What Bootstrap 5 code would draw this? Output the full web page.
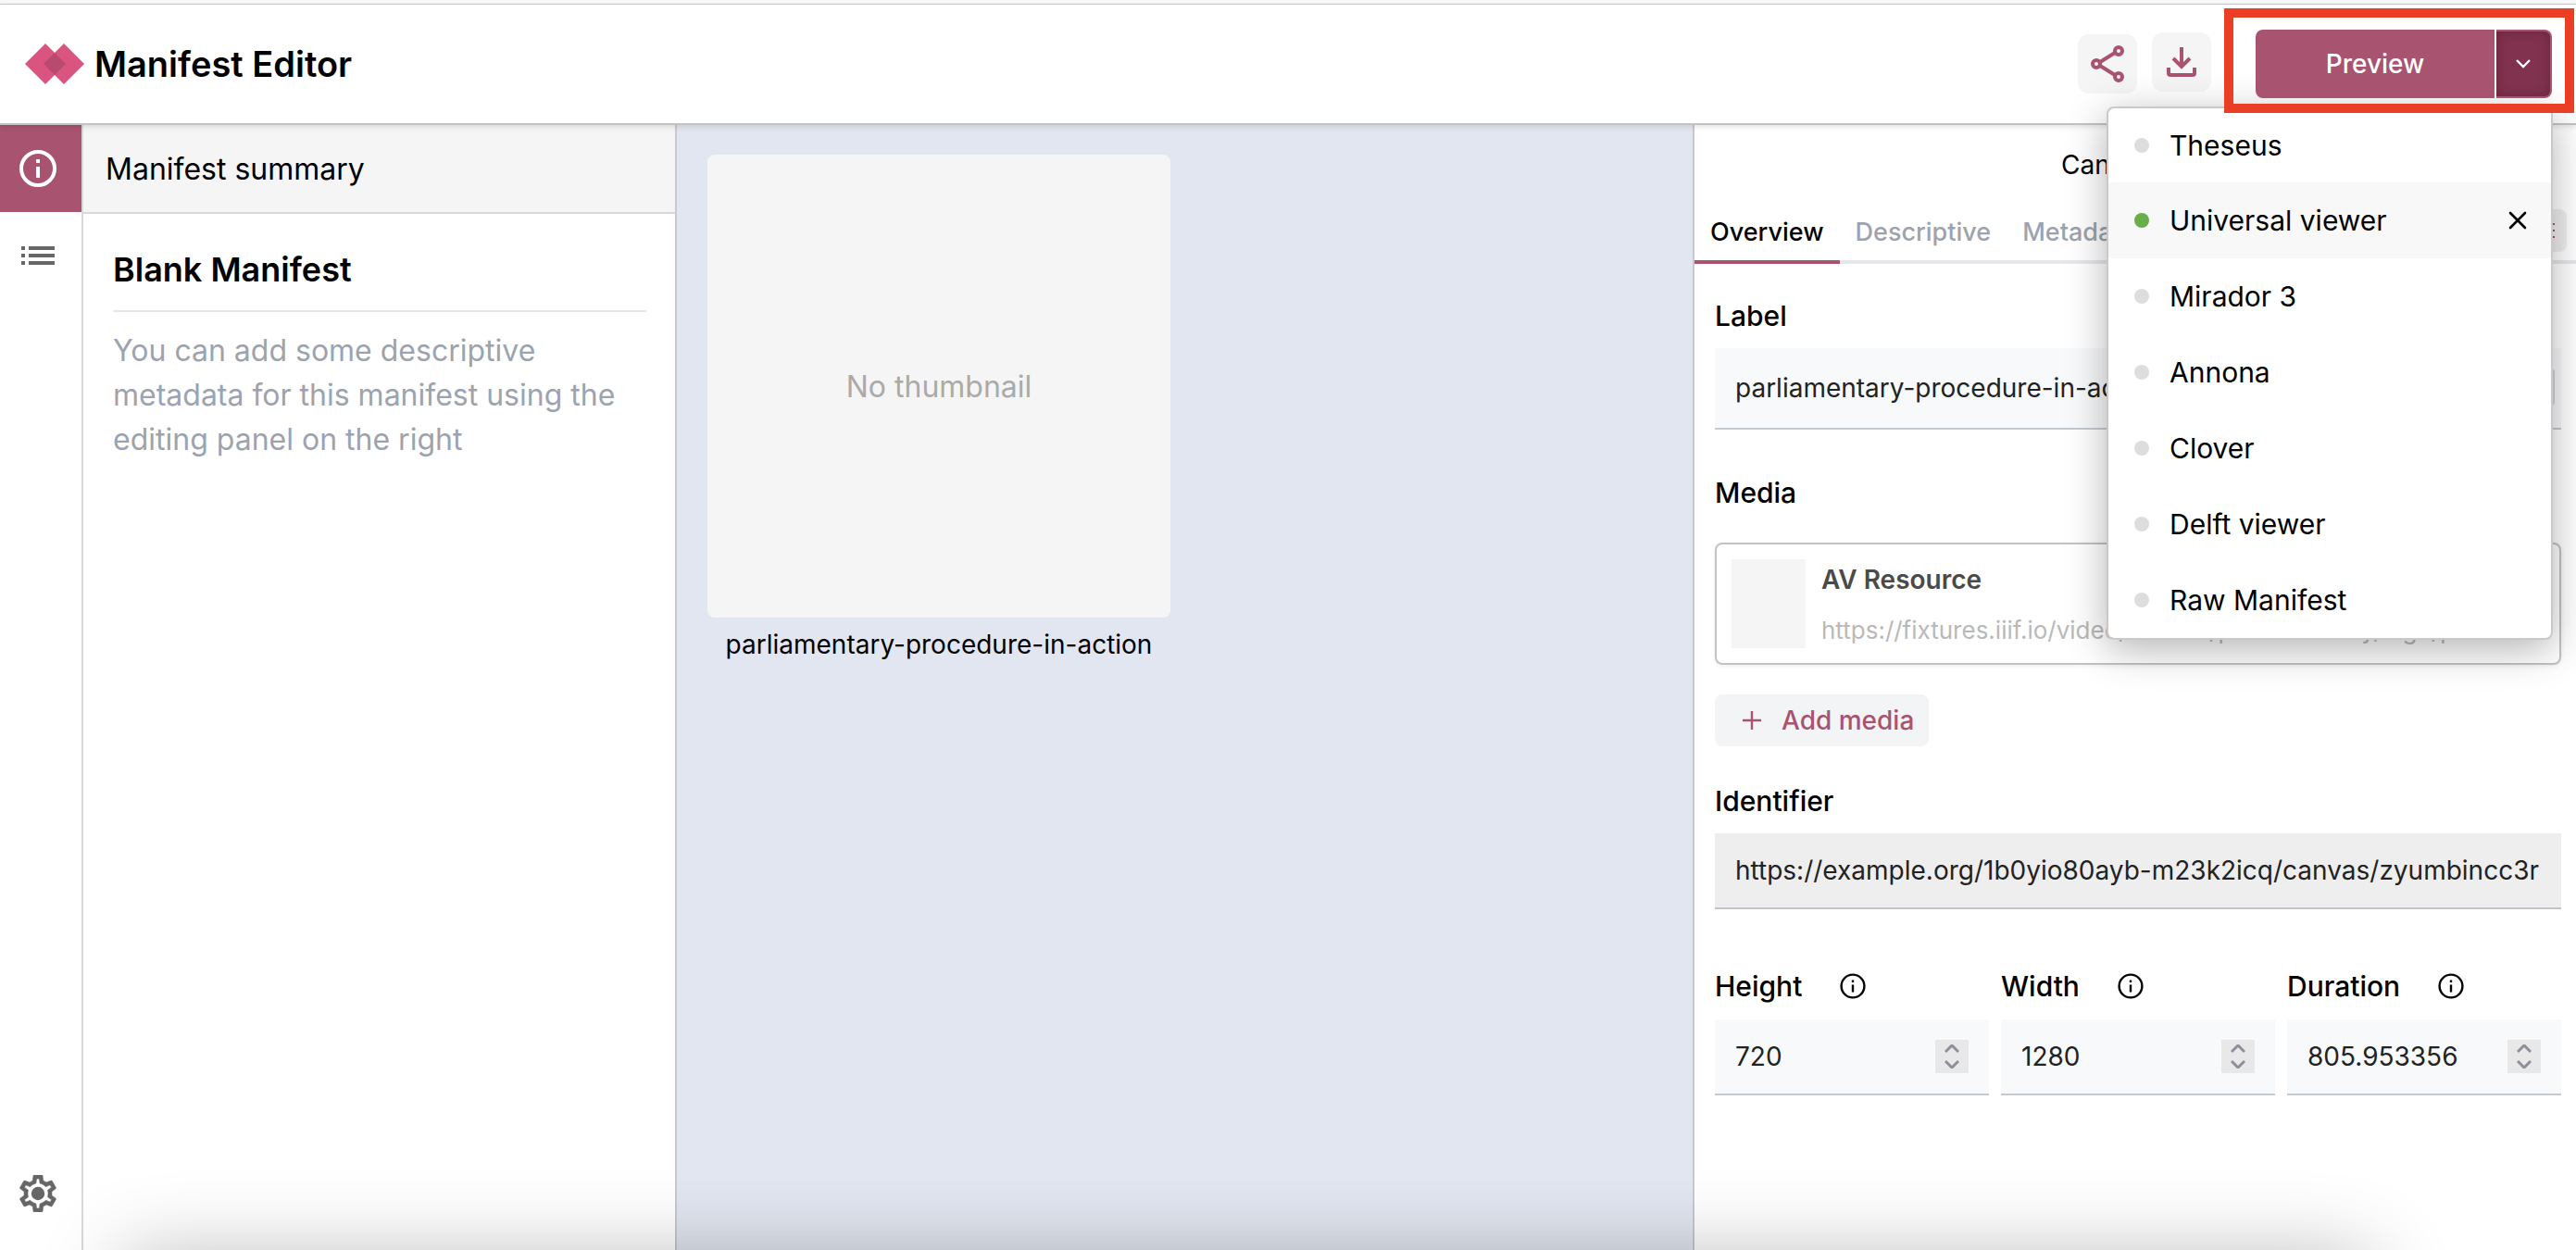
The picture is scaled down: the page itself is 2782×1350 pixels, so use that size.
<!DOCTYPE html>
<html lang="en">
<head>
<meta charset="utf-8">
<title>Manifest Editor</title>
<meta name="viewport" content="width=device-width, initial-scale=1">
<link rel="stylesheet" href="https://cdn.jsdelivr.net/npm/bootstrap@5.3.0/dist/css/bootstrap.min.css">
<style>
:root { --brand: #a85370; --brand-dark: #80324e; --line: #c9c9c9; --muted: #9ca3af; }
body { font-family: Inter, "Liberation Sans", sans-serif; font-size: 28px; line-height: 40px; color: #000; background: #fff; overflow: hidden; }
svg { display: block; flex: none; }
.top-strip { height: 5px; background: #f8f8fa; border-bottom: 1px solid #c9c9cb; flex: none; }
.app-header { height: 130px; padding: 0 26px; border-bottom: 2px solid #c3c3c6; box-shadow: 0 2px 6px rgba(0,0,0,.12); z-index: 5; background: #fff; flex: none; }
.brand-name { font-size: 38px; font-weight: 600; color: #000; gap: 10px; }
.tool-btn { width: 64px; height: 64px; border-radius: 12px; background: #f5f5f5; color: var(--brand); border: 0; padding: 0; }
.download-btn { margin-bottom: 4px; }
.actions { gap: 14px; }
.callout { border: 10px solid #eb3f25; padding: 13px 14px 6px 24px; margin-right: -24px; margin-bottom: 7px; z-index: 1100; }
.preview-btn { width: 258px; height: 74px; background: var(--brand); color: #fff; font-size: 28px; font-weight: 500; border: 0; border-radius: 8px 0 0 8px; }
.caret-btn { width: 60px; height: 74px; background: var(--brand-dark); border: 2px solid var(--brand); border-left: 0; border-radius: 0 8px 8px 0; box-shadow: inset 0 0 12px rgba(60,10,30,.35); color: #fff; margin-left: 2px; padding: 0; }
.viewer-menu { display: block; top: 110px; right: 25px; width: 482px; padding: 0; border: 2px solid var(--line); border-radius: 8px; font-size: 30px; box-shadow: 0 10px 44px rgba(0,0,0,.3); overflow: hidden; margin: 0; }
.viewer-menu .dropdown-item { height: 82px; padding: 0 26px 0 28px; gap: 22px; color: #000; }
.viewer-menu li:first-child .dropdown-item { height: 80px; }
.viewer-menu .dropdown-item.active { background: #f8f8f8; }
.dot { width: 16px; height: 16px; border-radius: 50%; background: #ddd; flex: none; }
.active .dot { background: #69ae48; }
.rail { width: 90px; border-right: 2px solid #d9d9d9; flex: none; }
.rail-btn { height: 94px; padding: 0 6px 0 0; border: 0; border-radius: 0; color: #666; width: 100%; }
.rail-btn.on { background: var(--brand); color: #fff; }
.rail-end { margin-bottom: 14px; }
.summary { width: 641px; border-right: 2px solid var(--line); flex: none; }
.summary-head { height: 96px; background: #f5f5f5; border-bottom: 2px solid #d9d9d9; padding: 2px 24px 0; font-size: 32px; }
.summary-body { padding: 36px 31px 0 32px; }
.summary-body h2 { font-size: 36px; line-height: 48px; font-weight: 600; margin: 0; padding-bottom: 20px; border-bottom: 2px solid #e5e7eb; }
.summary-body p { font-size: 32px; line-height: 48px; color: var(--muted); padding-top: 18px; }
.board { background: #e2e6f0; padding: 32px 33px; }
.thumb-card { width: 500px; }
.thumb-box { height: 500px; background: #f5f5f5; border-radius: 8px; color: #aaa; font-size: 32px; padding-top: 2px; }
.thumb-card figcaption { padding-top: 9px; }
.editor { width: 954px; border-left: 2px solid var(--line); flex: none; }
.editor-title { height: 86px; padding: 0 0 0 396px; }
.editor .nav { height: 64px; border-bottom: 4px solid #e5e7eb; }
.editor .nav-link { height: 64px; padding: 10px 17px 0; color: var(--muted); font-size: 27px; font-weight: 500; border-bottom: 4px solid transparent; }
.editor .nav-link.active { color: #000; border-color: var(--brand); }
.tabs-more { width: 62px; height: 46px; right: 10px; top: 5px; background: #efeff1; color: var(--brand); border: 0; border-radius: 8px; padding: 0; }
.editor form { padding: 36px 16px 0 22px; }
.editor label, .lbl { font-weight: 500; font-size: 30px; line-height: 40px; margin: 0; display: block; }
.field { border: 0; border-bottom: 2px solid #c3cad1; border-radius: 0; background: #f8f9fb; font-size: 28px; line-height: 40px; height: 82px; padding: 0 22px; color: #222; box-shadow: none; appearance: textfield; }
.field.tall { height: 88px; }
.field[readonly] { background: #eee; border-color: #bfc4ca; }
.field:focus { box-shadow: none; }
.field::-webkit-inner-spin-button { display: none; }
.label-box { padding-top: 15px; }
.lang-btn { width: 60px; height: 40px; right: 7px; bottom: 26px; border: 0; border-radius: 4px; background: #d3d5d9; }
.media-label { padding-top: 48px; }
.media-card { margin-top: 34px; border: 2px solid #c3c3c3; border-radius: 8px; padding: 16px; gap: 17px; height: 132px; box-shadow: 0 1px 4px rgba(0,0,0,.08); }
.media-thumb { width: 80px; background: #f5f5f5; flex: none; }
.media-name { font-weight: 600; color: #4a4a4a; padding-top: 2px; }
.media-url { font-size: 26px; color: #b9b9b9; margin-top: 15px; }
.add-btn { margin-top: 32px; height: 56px; background: #f3f4f6; color: var(--brand); border: 0; border-radius: 8px; font-size: 28px; font-weight: 500; line-height: 40px; padding: 0 16px 0 30px; gap: 22px; }
.ident { padding-top: 39px; }
.dims { padding-top: 63px; gap: 13px; }
.dims > div { flex: 1 1 0; min-width: 0; }
.dim-head { gap: 41px; padding-bottom: 16px; }
.spin { width: 36px; height: 36px; right: 22px; top: 22px; background: #e8e8e9; color: #8f8f9b; border: 0; padding: 0; }
.edge-clip { left: 0; right: 0; bottom: 0; height: 140px; padding: 140px 224px 0 132px; overflow: hidden; pointer-events: none; z-index: 20; }
.edge-shade { height: 0; box-shadow: 0 110px 90px 100px rgba(0,0,0,.29); margin: 0 100px; }
</style>
</head>
<body class="vh-100 d-flex flex-column position-relative">
<div class="top-strip"></div>
<header class="app-header d-flex align-items-center justify-content-between position-relative">
  <a class="brand-name d-flex align-items-center text-decoration-none" href="#">
    <svg width="66" height="46" viewBox="0 0 66 46"><path d="M1 23 23 1l22 22-22 22z" fill="#d9547f"/><path d="M21 23 43 1l22 22-22 22z" fill="#d9547f"/><path d="M21 23 33 11l12 12-12 12z" fill="#b84a70"/></svg>
    <span>Manifest Editor</span>
  </a>
  <div class="actions d-flex align-items-center">
    <div class="d-flex align-items-center gap-3">
      <button class="btn tool-btn d-flex align-items-center justify-content-center" aria-label="Share"><svg width="38" height="42" viewBox="0 0 38 42" fill="none" stroke="currentColor" stroke-width="4"><circle cx="31" cy="7" r="4"/><circle cx="7" cy="21" r="4"/><circle cx="31" cy="35" r="4"/><path d="M11 19 27 9M11 23l16 10"/></svg></button>
      <button class="btn tool-btn download-btn d-flex align-items-center justify-content-center" aria-label="Download"><svg width="34" height="34" viewBox="0 0 34 34" fill="none" stroke="currentColor" stroke-width="4"><path d="M17 1v20M8 13l9 9 9-9M3 23v6q0 2 2 2h24q2 0 2-2v-6"/></svg></button>
    </div>
    <div class="callout d-flex position-relative">
      <button class="btn preview-btn">Preview</button>
      <button class="btn caret-btn d-flex align-items-center justify-content-center" aria-label="Choose viewer" aria-expanded="true"><svg width="16" height="10" viewBox="0 0 16 10" fill="none" stroke="currentColor" stroke-width="2.4"><path d="m1 1 7 7 7-7"/></svg></button>
    </div>
  </div>
  <ul class="dropdown-menu viewer-menu">
    <li><a class="dropdown-item d-flex align-items-center" href="#"><span class="dot"></span>Theseus</a></li>
    <li><a class="dropdown-item active d-flex align-items-center" href="#"><span class="dot"></span>Universal viewer<svg class="ms-auto" width="20" height="20" viewBox="0 0 20 20" fill="none" stroke="currentColor" stroke-width="2.6" stroke-linecap="round"><path d="m2 2 16 16M18 2 2 18"/></svg></a></li>
    <li><a class="dropdown-item d-flex align-items-center" href="#"><span class="dot"></span>Mirador 3</a></li>
    <li><a class="dropdown-item d-flex align-items-center" href="#"><span class="dot"></span>Annona</a></li>
    <li><a class="dropdown-item d-flex align-items-center" href="#"><span class="dot"></span>Clover</a></li>
    <li><a class="dropdown-item d-flex align-items-center" href="#"><span class="dot"></span>Delft viewer</a></li>
    <li><a class="dropdown-item d-flex align-items-center" href="#"><span class="dot"></span>Raw Manifest</a></li>
  </ul>
</header>
<main class="d-flex flex-grow-1">
  <nav class="rail d-flex flex-column justify-content-between">
    <div>
      <button class="btn rail-btn on d-flex align-items-center justify-content-center" aria-label="Summary"><svg width="40" height="40" viewBox="0 0 40 40" fill="none" stroke="currentColor" stroke-width="4"><circle cx="20" cy="20" r="18"/><path d="M20 18v12M20 10v4"/></svg></button>
      <button class="btn rail-btn d-flex align-items-center justify-content-center" aria-label="Structure"><svg width="36" height="20" viewBox="0 0 36 20" fill="currentColor"><path d="M0 0h4v4H0zM8 0h28v4H8zM0 8h4v4H0zM8 8h28v4H8zM0 16h4v4H0zM8 16h28v4H8z"/></svg></button>
    </div>
    <button class="btn rail-btn rail-end d-flex align-items-center justify-content-center" aria-label="Settings"><svg width="40" height="40" viewBox="2.2 2 19.6 20" fill="currentColor"><path d="M19.43 12.98c.04-.32.07-.64.07-.98 0-.34-.03-.66-.07-.98l2.11-1.65c.19-.15.24-.42.12-.64l-2-3.46c-.09-.16-.26-.25-.44-.25-.06 0-.12.01-.17.03l-2.49 1c-.52-.4-1.08-.73-1.69-.98l-.38-2.65C14.46 2.18 14.25 2 14 2h-4c-.25 0-.46.18-.49.42l-.38 2.65c-.61.25-1.17.59-1.69.98l-2.49-1c-.06-.02-.12-.03-.18-.03-.17 0-.34.09-.43.25l-2 3.46c-.13.22-.07.49.12.64l2.11 1.65c-.04.32-.07.65-.07.98 0 .33.03.66.07.98l-2.11 1.65c-.19.15-.24.42-.12.64l2 3.46c.09.16.26.25.44.25.06 0 .12-.01.17-.03l2.49-1c.52.4 1.08.73 1.69.98l.38 2.65c.03.24.24.42.49.42h4c.25 0 .46-.18.49-.42l.38-2.65c.61-.25 1.17-.59 1.69-.98l2.49 1c.06.02.12.03.18.03.17 0 .34-.09.43-.25l2-3.46c.12-.22.07-.49-.12-.64l-2.11-1.65zm-1.98-1.71c.04.31.05.52.05.73 0 .21-.02.43-.05.73l-.14 1.13.89.7 1.08.84-.7 1.21-1.27-.51-1.04-.42-.9.68c-.43.32-.84.56-1.25.73l-1.06.43-.16 1.13-.2 1.35h-1.4l-.19-1.35-.16-1.13-1.06-.43c-.43-.18-.83-.41-1.23-.71l-.91-.7-1.06.43-1.27.51-.7-1.21 1.08-.84.89-.7-.14-1.13c-.03-.31-.05-.54-.05-.74s.02-.43.05-.73l.14-1.13-.89-.7-1.08-.84.7-1.21 1.27.51 1.04.42.9-.68c.43-.32.84-.56 1.25-.73l1.06-.43.16-1.13.2-1.35h1.39l.19 1.35.16 1.13 1.06.43c.43.18.83.41 1.23.71l.91.7 1.06-.43 1.27-.51.7 1.21-1.07.85-.89.7.14 1.13z" stroke="currentColor" stroke-width=".3"/><circle cx="12" cy="12" r="3.6"/></svg></button>
  </nav>
  <section class="summary">
    <div class="summary-head d-flex align-items-center">Manifest summary</div>
    <div class="summary-body">
      <h2>Blank Manifest</h2>
      <p class="mb-0">You can add some descriptive metadata for this manifest using the editing panel on the right</p>
    </div>
  </section>
  <section class="board flex-grow-1">
    <figure class="thumb-card m-0">
      <div class="thumb-box d-flex align-items-center justify-content-center">No thumbnail</div>
      <figcaption class="text-center">parliamentary-procedure-in-action</figcaption>
    </figure>
  </section>
  <section class="editor">
    <div class="editor-title d-flex align-items-center">Canvas</div>
    <div class="position-relative">
      <div class="nav flex-nowrap">
        <a class="nav-link active" href="#">Overview</a><a class="nav-link" href="#">Descriptive</a><a class="nav-link" href="#">Metadata</a>
      </div>
      <button class="btn tabs-more position-absolute d-flex align-items-center justify-content-center" aria-label="More tabs"><svg width="36" height="16" viewBox="0 0 36 16" fill="currentColor"><path d="M0 0h4v2H0zM8 0h28v2H8zM0 7h4v2H0zM8 7h28v2H8zM0 14h4v2H0zM8 14h28v2H8z"/></svg></button>
    </div>
    <form>
      <label for="f-label">Label</label>
      <div class="label-box position-relative"><input id="f-label" class="form-control field tall" type="text" value="parliamentary-procedure-in-action"><button type="button" class="lang-btn position-absolute" aria-label="Language"></button></div>
      <div class="media-label lbl">Media</div>
      <div class="media-card d-flex">
        <div class="media-thumb"></div>
        <div class="overflow-hidden">
          <div class="media-name">AV Resource</div>
          <div class="media-url text-truncate">https://fixtures.iiif.io/video/indiana/parliamentary/high/parliamentary-procedure.mp4</div>
        </div>
      </div>
      <button type="button" class="btn add-btn d-flex align-items-center"><svg width="20" height="20" viewBox="0 0 20 20" fill="none" stroke="currentColor" stroke-width="2.4"><path d="M10 0v20M0 10h20"/></svg>Add media</button>
      <div class="ident">
        <label for="f-id">Identifier</label>
        <div class="label-box"><input id="f-id" class="form-control field" type="text" readonly value="https://example.org/1b0yio80ayb-m23k2icq/canvas/zyumbincc3r"></div>
      </div>
      <div class="dims d-flex">
        <div>
          <div class="dim-head d-flex align-items-center"><label for="f-h">Height</label><svg width="28" height="28" viewBox="0 0 28 28" fill="none" stroke="currentColor" stroke-width="2.4"><circle cx="14" cy="14" r="12.4"/><path d="M14 12.5v8M14 7.5V10"/></svg></div>
          <div class="position-relative"><input id="f-h" class="form-control field" type="number" value="720"><button type="button" class="spin position-absolute d-flex align-items-center justify-content-center" aria-label="Step height"><svg width="16" height="26" viewBox="0 0 16 26" fill="none" stroke="currentColor" stroke-width="3"><path d="m1 8 7-7 7 7M1 18l7 7 7-7"/></svg></button></div>
        </div>
        <div>
          <div class="dim-head d-flex align-items-center"><label for="f-w">Width</label><svg width="28" height="28" viewBox="0 0 28 28" fill="none" stroke="currentColor" stroke-width="2.4"><circle cx="14" cy="14" r="12.4"/><path d="M14 12.5v8M14 7.5V10"/></svg></div>
          <div class="position-relative"><input id="f-w" class="form-control field" type="number" value="1280"><button type="button" class="spin position-absolute d-flex align-items-center justify-content-center" aria-label="Step width"><svg width="16" height="26" viewBox="0 0 16 26" fill="none" stroke="currentColor" stroke-width="3"><path d="m1 8 7-7 7 7M1 18l7 7 7-7"/></svg></button></div>
        </div>
        <div>
          <div class="dim-head d-flex align-items-center"><label for="f-d">Duration</label><svg width="28" height="28" viewBox="0 0 28 28" fill="none" stroke="currentColor" stroke-width="2.4"><circle cx="14" cy="14" r="12.4"/><path d="M14 12.5v8M14 7.5V10"/></svg></div>
          <div class="position-relative"><input id="f-d" class="form-control field" type="number" step="any" value="805.953356"><button type="button" class="spin position-absolute d-flex align-items-center justify-content-center" aria-label="Step duration"><svg width="16" height="26" viewBox="0 0 16 26" fill="none" stroke="currentColor" stroke-width="3"><path d="m1 8 7-7 7 7M1 18l7 7 7-7"/></svg></button></div>
        </div>
      </div>
    </form>
  </section>
</main>
<div class="edge-clip position-absolute"><div class="edge-shade"></div></div>
<script src="https://cdn.jsdelivr.net/npm/bootstrap@5.3.0/dist/js/bootstrap.bundle.min.js"></script>
</body>
</html>
